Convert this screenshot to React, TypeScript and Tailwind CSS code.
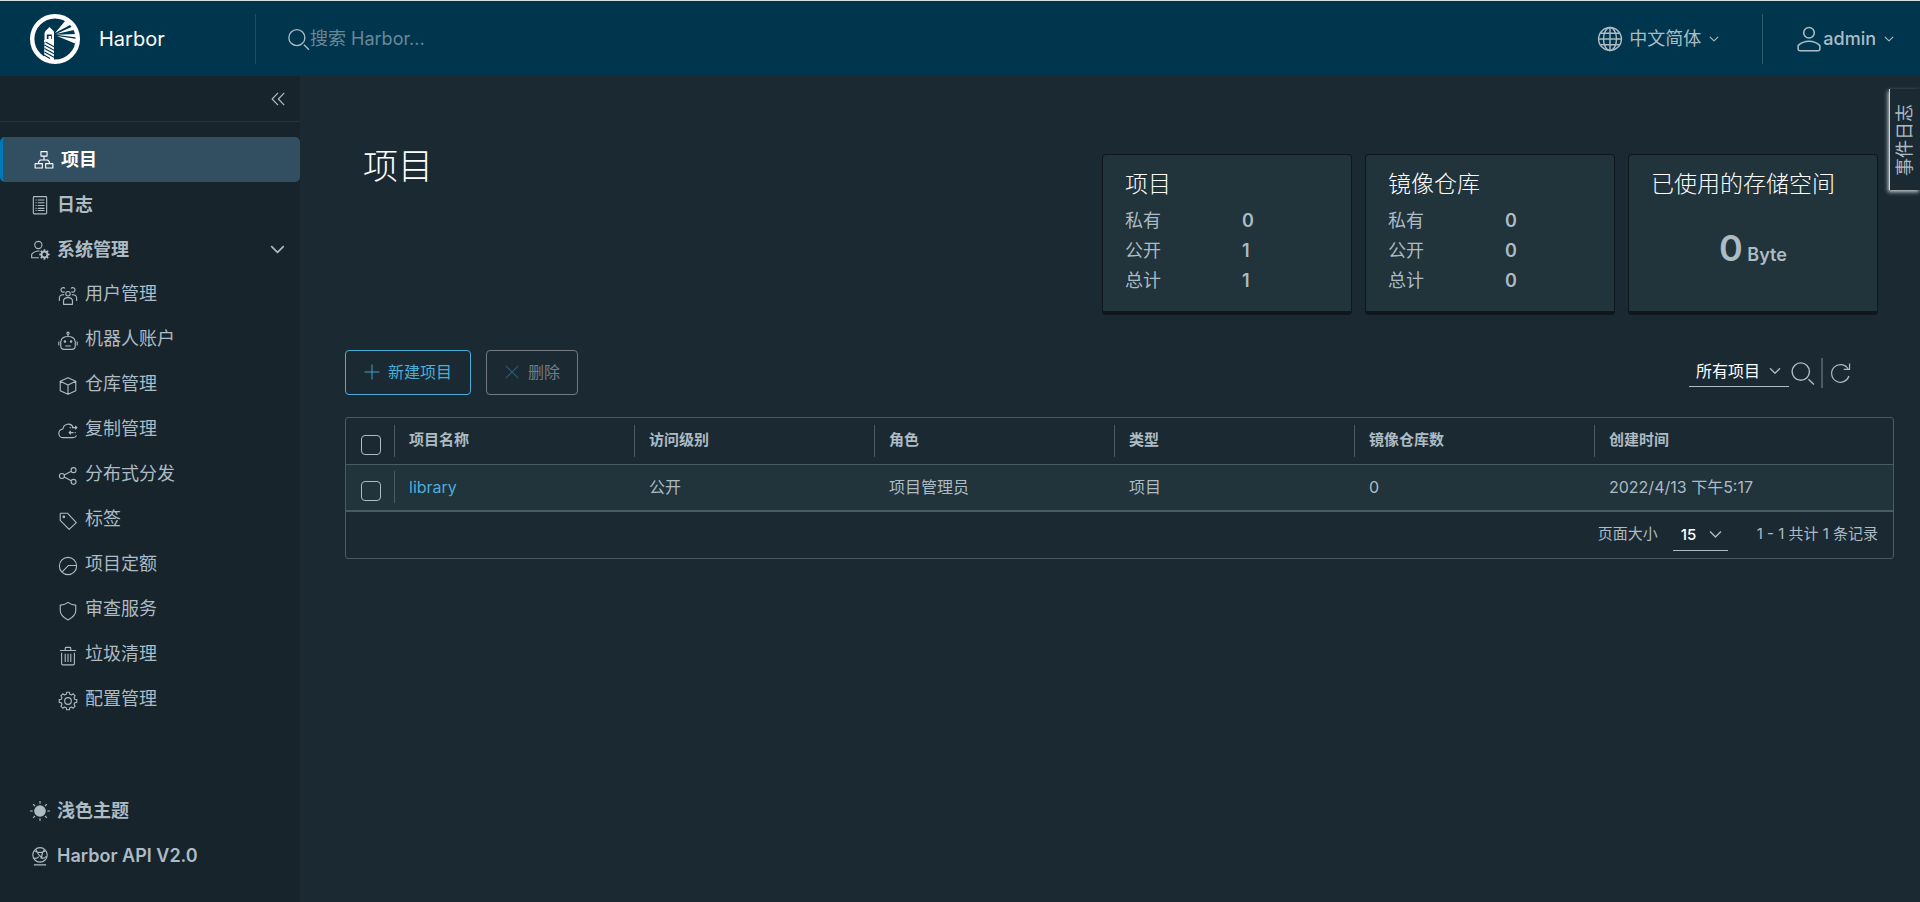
import type { ReactNode } from "react";

function gearPath(cx: number, cy: number, outer: number, inner: number, teeth: number) {
  const step = (Math.PI * 2) / teeth;
  const at = (r: number, a: number) =>
    `${(cx + r * Math.cos(a)).toFixed(2)},${(cy + r * Math.sin(a)).toFixed(2)}`;
  let d = "";
  for (let i = 0; i < teeth; i++) {
    const a = i * step - Math.PI / 2;
    d += `${i === 0 ? "M" : "L"}${at(inner, a - step * 0.33)}`;
    d += `L${at(outer, a - step * 0.2)}L${at(outer, a + step * 0.2)}L${at(inner, a + step * 0.33)}`;
  }
  return d + "Z";
}

function Icon({ children, className = "size-5" }: { children: ReactNode; className?: string }) {
  return (
    <svg
      viewBox="0 0 36 36"
      className={`${className} shrink-0`}
      fill="none"
      stroke="currentColor"
      strokeWidth={2}
      strokeLinejoin="round"
      aria-hidden="true"
    >
      {children}
    </svg>
  );
}

const icons = {
  projects: (
    <>
      <rect x="12.5" y="3" width="11" height="8" />
      <rect x="2" y="24.500" width="13" height="8" />
      <rect x="21" y="24.500" width="13" height="8" />
      <path d="M18 11v7M8.500 24v-3l3-3h13l3 3v3" />
    </>
  ),
  logs: (
    <>
      <rect x="6" y="3" width="24" height="31" rx="1.5" />
      <path d="M10 9h2m2 0h12M10 14h2m2 0h12M10 19h2m2 0h12M10 24h2m2 0h12M10 28h2m2 0h12" />
    </>
  ),
  admin: (
    <>
      <circle cx="15" cy="9" r="6.500" />
      <path d="M16 32H3v-6a16 16 0 0 1 14-6" />
      <path fill="currentColor" stroke="none" fillRule="evenodd" d={gearPath(26, 26, 9.500, 7, 8) + "M26 22.500a3.500 3.500 0 1 0 0 7a3.500 3.500 0 1 0 0-7Z"} />
    </>
  ),
  users: (
    <>
      <circle cx="18" cy="14" r="4" />
      <path d="M10 33v-6c0-4 4-6 8-6s8 2 8 6v6ZM12 10A4 4 0 1 1 12.500 4.500M24 10A4 4 0 1 0 23.500 4.500" />
      <path d="M11 16c-5-1-8 1-8.500 5v6M25 16c5-1 8 1 8.500 5v6" />
    </>
  ),
  robot: (
    <>
      <circle cx="18" cy="4" r="2" />
      <path d="M18 6v4M1.500 19v7M34.500 19v7M5 19c1-6 5-9 13-9s12 3 13 9v8c0 4-2 6-6 6H11c-4 0-6-2-6-6ZM13 27h10" />
      <circle cx="12.500" cy="19" r="1.300" fill="currentColor" />
      <circle cx="23.500" cy="19" r="1.300" fill="currentColor" />
    </>
  ),
  cube: <path d="M18 3 32 9.500v17L18 33 4 26.500v-17ZM4 9.500 18 16l14-6.500M18 16v17" />,
  cloud: (
    <>
      <path d="M27 11A9.500 9.500 0 0 0 9 14.500C4 15 1.500 18 1.500 22.500S5 30 9 30h18c3 0 5-1.500 6.500-4" />
      <path d="M21 12h2m2 0h9m-3-3 3 3-3 3M32 21h-2m-2 0h-8m3-3-3 3 3 3" />
    </>
  ),
  share: (
    <>
      <circle cx="7" cy="18" r="4.500" />
      <circle cx="28" cy="7.500" r="4.500" />
      <circle cx="28" cy="28.500" r="4.500" />
      <path d="m11 16 13-6.500M11 20l13 6.500" />
    </>
  ),
  tag: (
    <>
      <path d="M4 5v12l16 16 13-12L17 4H5Z" />
      <circle cx="10.500" cy="10.500" r="1.500" fill="currentColor" />
    </>
  ),
  quota: (
    <>
      <circle cx="18" cy="18" r="15.500" />
      <path d="M33 17H19L7.500 28.500" />
    </>
  ),
  shield: <path d="M18 2.500c4 3 9 5 14 5V17c0 8-6 13-14 17C10 30 4 25 4 17V7.500c5 0 10-2 14-5Z" />,
  trash: (
    <path d="M3.500 8h29M6.500 12v20c0 1 1 2 2 2h19c1 0 2-1 2-2V12M13 7.500V4c0-1 1-1.500 2-1.500h6c1 0 2 .5 2 1.500v3.500M13 14v15M18 14v15M23 14v15" />
  ),
  cog: (
    <>
      <path d={gearPath(18, 18, 16, 12.500, 8)} />
      <circle cx="18" cy="18" r="6" />
    </>
  ),
  sun: (
    <>
      <circle cx="18" cy="18" r="10.500" fill="currentColor" stroke="none" />
      <path d="M18 0v5M18 31v5M0 18h5M31 18h5M5.500 5.500l3.500 3.500M27 27l3.500 3.500M5.500 30.500 9 27M27 9l3.500-3.500" />
    </>
  ),
  api: (
    <>
      <circle cx="18" cy="16" r="13" />
      <path d="M8 9c6 3 14 3 20 0M11 6c1 6 6 12 13 17M26 7c-3 3-5 7-5 13M6 21c3 2 7 1 10-2M19 21c4 2 8 1 11-3M7 34h22" />
    </>
  ),
  search: (
    <>
      <circle cx="16.300" cy="16" r="12" />
      <path d="m27 26.500 7.500 7.500" />
    </>
  ),
  user: (
    <>
      <circle cx="18" cy="10" r="6.800" />
      <path d="M4 26.500c7.500-7.500 20.500-7.500 28 0V31a2 2 0 0 1-2 2H6a2 2 0 0 1-2-2Z" />
    </>
  ),
  globe: (
    <>
      <circle cx="18" cy="18" r="15.800" />
      <ellipse cx="18" cy="18" rx="9" ry="15.800" />
      <path d="M18 2v32M2 18h32M4.500 10h27M4.500 26h27" />
    </>
  ),
  chevron: <path d="m3 10 15 15 15-15" strokeWidth={4} />,
  collapse: <path d="M18 2 3 18l15 16M34 2 19 18l15 16" strokeWidth={3} />,
  plus: <path d="M18 1v34M1 18h34" />,
  close: <path d="m4 4 28 28M32 4 4 32" strokeWidth={2.500} />,
  refresh: <path d="M31 23A14.500 14.500 0 1 1 29.500 11M32 2.500V12H22.500" />,
};

function Logo() {
  return (
    <svg viewBox="0 0 50 50" className="size-[50px] shrink-0" aria-hidden="true">
      <circle cx="25" cy="25" r="22.800" fill="none" stroke="#fff" strokeWidth="4.400" />
      <g fill="#fff">
        <path d="M19.500 13 24 17.500V19h-9v-1.500Z" />
        <path fillRule="evenodd" d="M14.500 18.500h9.500v8h-9.500ZM16.800 20.500v4.500h5v-4.500Z" />
        <path d="M18.500 22h2.500v3.500h-2.500ZM14 26h10v2H14ZM14.500 28h9.500v20l-10-2Z" />
        <path d="M25 19 35.500 6.500l5.500 4ZM26 20 42.500 12.500l1.500 3.500ZM26 20.800 47 20v3.500ZM27 22 47 25l-2 4.500Z" />
      </g>
      <path d="m24.500 33-9-5M24.500 36.500l-10-5.500M24.500 40l-10-5.500M24.500 43.500l-10-5.500M20 44.500l-6-3.500" stroke="#00364d" strokeWidth="1.100" />
    </svg>
  );
}

const subItems = [
  { label: "用户管理", icon: icons.users },
  { label: "机器人账户", icon: icons.robot },
  { label: "仓库管理", icon: icons.cube },
  { label: "复制管理", icon: icons.cloud },
  { label: "分布式分发", icon: icons.share },
  { label: "标签", icon: icons.tag },
  { label: "项目定额", icon: icons.quota },
  { label: "审查服务", icon: icons.shield },
  { label: "垃圾清理", icon: icons.trash },
  { label: "配置管理", icon: icons.cog },
];

function Header() {
  return (
    <header className="flex h-[76px] shrink-0 items-center border-t border-[#d5dede] bg-[#00364d]">
      <a href="#home" className="flex w-[255px] shrink-0 items-center gap-[19px] pl-[30px] text-xl text-white">
        <Logo />
        Harbor
      </a>
      <label className="flex h-[50px] flex-1 items-center border-l border-[#1f4f66] pl-[30px] text-[#adbbc4]">
        <Icon className="size-6">{icons.search}</Icon>
        <input
          type="search"
          aria-label="搜索 Harbor"
          placeholder="搜索 Harbor..."
          className="h-10 w-full bg-transparent text-lg text-white outline-none placeholder:text-[#6a8797]"
        />
      </label>
      <button className="flex h-[50px] items-center pr-[43px] text-lg text-[#adbbc4]">
        <Icon className="mr-[6px] size-[26px]">{icons.globe}</Icon>
        中文简体
        <Icon className="ml-2 size-[10px]">{icons.chevron}</Icon>
      </button>
      <button className="flex h-[50px] items-center border-l border-[#33596e] pr-[26px] pl-8 text-lg font-medium text-[#adbbc4]">
        <Icon className="size-7">{icons.user}</Icon>
        admin
        <Icon className="ml-2 size-[10px]">{icons.chevron}</Icon>
      </button>
    </header>
  );
}

function Sidebar() {
  const top = "flex h-[45px] items-center gap-[7px] pl-[30px] text-lg font-bold";
  return (
    <aside className="flex w-[300px] shrink-0 flex-col bg-[#17242b] pb-6 text-[#adbbc4]">
      <div className="flex h-[46px] items-center justify-end border-b border-[#22343c] pr-[15px]">
        <button aria-label="收起菜单">
          <Icon className="size-[14px]">{icons.collapse}</Icon>
        </button>
      </div>
      <nav className="pt-[15px]">
        <a href="#projects" className="flex h-[45px] items-center gap-[7px] rounded-[5px] border-l-[3px] border-[#0079b8] bg-[#324f62] pl-[31px] text-lg font-bold text-white">
          <Icon>{icons.projects}</Icon>
          项目
        </a>
        <a href="#logs" className={top}>
          <Icon>{icons.logs}</Icon>
          日志
        </a>
        <button className={`${top} w-full pr-[15px]`} aria-expanded="true">
          <Icon>{icons.admin}</Icon>
          系统管理
          <Icon className="ml-auto size-[15px]">{icons.chevron}</Icon>
        </button>
        <ul>
          {subItems.map((item) => (
            <li key={item.label}>
              <a href={`#${item.label}`} className="flex h-[45px] items-center gap-[7px] pb-[2px] pl-[58px] text-lg">
                <Icon className="mt-1 size-5">{item.icon}</Icon>
                {item.label}
              </a>
            </li>
          ))}
        </ul>
      </nav>
      <div className="mt-auto">
        <button className={`${top} w-full`}>
          <Icon>{icons.sun}</Icon>
          浅色主题
        </button>
        <a href="#api" className="flex h-[45px] items-center gap-[7px] pl-[30px] text-lg font-semibold">
          <Icon>{icons.api}</Icon>
          Harbor API V2.0
        </a>
      </div>
    </aside>
  );
}

function Card({ title, children }: { title: string; children: ReactNode }) {
  return (
    <section className="flex h-[161px] w-[250px] flex-col rounded border border-b-4 border-[#0f171c] bg-[#21333b] px-[22px] pt-[13px]">
      <h2 className="h-[38px] text-[23px] leading-8 font-light whitespace-nowrap text-white">{title}</h2>
      {children}
    </section>
  );
}

function Stats({ values }: { values: [string, number][] }) {
  return (
    <dl className="text-lg leading-[30px]">
      {values.map(([label, value]) => (
        <div key={label} className="flex">
          <dt className="w-[117px]">{label}</dt>
          <dd className="font-semibold">{value}</dd>
        </div>
      ))}
    </dl>
  );
}

function Checkbox({ label }: { label: string }) {
  return (
    <input
      type="checkbox"
      aria-label={label}
      className="mt-2 ml-[15px] block size-5 appearance-none rounded border border-[#adbbc4] checked:bg-[#49afd9]"
    />
  );
}

const columns = ["项目名称", "访问级别", "角色", "类型", "镜像仓库数", "创建时间"];
const cells = ["公开", "项目管理员", "项目", "0", "2022/4/13 下午5:17"];

function ProjectTable() {
  return (
    <div className="mt-[22px] rounded-[3px] border border-[#495a67]">
      <table className="w-full table-fixed border-collapse text-left">
        <thead>
          <tr className="h-[46px] border-b border-[#495a67] text-[15px]">
            <th className="w-12 p-0">
              <Checkbox label="全选" />
            </th>
            {columns.map((c) => (
              <th key={c} className="w-60 p-0 font-bold last:w-auto">
                <div className="flex h-8 items-center border-l border-[#495a67] pl-[14px]">
                  <span className="pb-px">{c}</span>
                </div>
              </th>
            ))}
          </tr>
        </thead>
        <tbody>
          <tr className="h-[47px] border-b-2 border-[#495a67] bg-[#21333b] text-base">
            <td className="p-0">
              <Checkbox label="选择 library" />
            </td>
            <td className="p-0">
              <div className="flex h-8 items-center border-l border-[#495a67] pl-[14px]">
                <a href="#library" className="pb-px text-[#49afd9]">
                  library
                </a>
              </div>
            </td>
            {cells.map((c) => (
              <td key={c} className="p-0 pb-px pl-[15px]">
                {c}
              </td>
            ))}
          </tr>
        </tbody>
      </table>
      <div className="flex h-[46px] items-center justify-end pr-[15px] pb-[2px] text-[15px]">
        <label htmlFor="page-size">页面大小</label>
        <div className="relative ml-[15px] mt-1 w-[55px] border-b border-[#adbbc4]">
          <select id="page-size" defaultValue="15" className="h-7 w-full appearance-none bg-transparent pl-2 font-medium text-white">
            <option value="15">15</option>
            <option value="25">25</option>
            <option value="50">50</option>
          </select>
          <Icon className="pointer-events-none absolute top-[6px] right-[6px] size-[13px]">{icons.chevron}</Icon>
        </div>
        <span className="ml-[29px]">1 - 1 共计 1 条记录</span>
      </div>
    </div>
  );
}

export default function App() {
  return (
    <div className="flex min-h-screen flex-col bg-[#1b2a32] font-[Inter,'Noto_Sans_CJK_SC',sans-serif] text-[#adbbc4]">
      <Header />
      <div className="relative flex flex-1">
        <Sidebar />
        <main className="min-w-0 flex-1 pt-[78px] pr-[26px] pl-[45px]">
          <div className="flex items-start justify-between pr-4 pl-[18px]">
            <h1 className="-mt-3 text-[35px] leading-[48px] font-light text-white">项目</h1>
            <div className="flex gap-[13px]">
              <Card title="项目">
                <Stats values={[["私有", 0], ["公开", 1], ["总计", 1]]} />
              </Card>
              <Card title="镜像仓库">
                <Stats values={[["私有", 0], ["公开", 0], ["总计", 0]]} />
              </Card>
              <Card title="已使用的存储空间">
                <p className="pt-[14px] text-center text-lg font-semibold">
                  <span className="text-[36px]">0</span> Byte
                </p>
              </Card>
            </div>
          </div>
          <div className="mt-[35px] flex items-center">
            <button className="flex h-[45px] items-center gap-2 rounded border border-[#49afd9] px-[18px] pb-px text-base text-[#49afd9]">
              <Icon className="size-4">{icons.plus}</Icon>
              新建项目
            </button>
            <button disabled className="ml-[15px] flex h-[45px] items-center gap-2 rounded border border-[#737b81] px-[17px] pb-px text-base text-[#737b81]">
              <Icon className="size-4 text-[#2c5f77]">{icons.close}</Icon>
              删除
            </button>
            <div className="ml-auto flex items-center pr-[42px]">
              <div className="relative w-[100px] border-b border-[#adbbc4]">
                <select aria-label="项目筛选" defaultValue="all" className="h-7 w-full appearance-none bg-transparent pb-[2px] pl-[7px] text-base text-white">
                  <option value="all">所有项目</option>
                  <option value="private">私有项目</option>
                  <option value="public">公开项目</option>
                </select>
                <Icon className="pointer-events-none absolute top-[7px] right-2 size-3">{icons.chevron}</Icon>
              </div>
              <button aria-label="搜索">
                <Icon className="size-[26px]">{icons.search}</Icon>
              </button>
              <span className="ml-[6px] h-[30px] w-[2px] bg-[#495a67]" />
              <button aria-label="刷新" className="ml-[7px]">
                <Icon className="size-[22px]">{icons.refresh}</Icon>
              </button>
            </div>
          </div>
          <ProjectTable />
        </main>
        <button className="absolute top-[13px] right-0 flex h-[101px] w-[31px] items-center justify-center border-l border-[#d0d5d8] bg-[#1b2a32] text-lg shadow-[-1px_2px_4px_0px_#c4cacd]">
          <span className="rotate-180 [text-orientation:sideways] [writing-mode:vertical-rl]">事件日志</span>
        </button>
      </div>
    </div>
  );
}
